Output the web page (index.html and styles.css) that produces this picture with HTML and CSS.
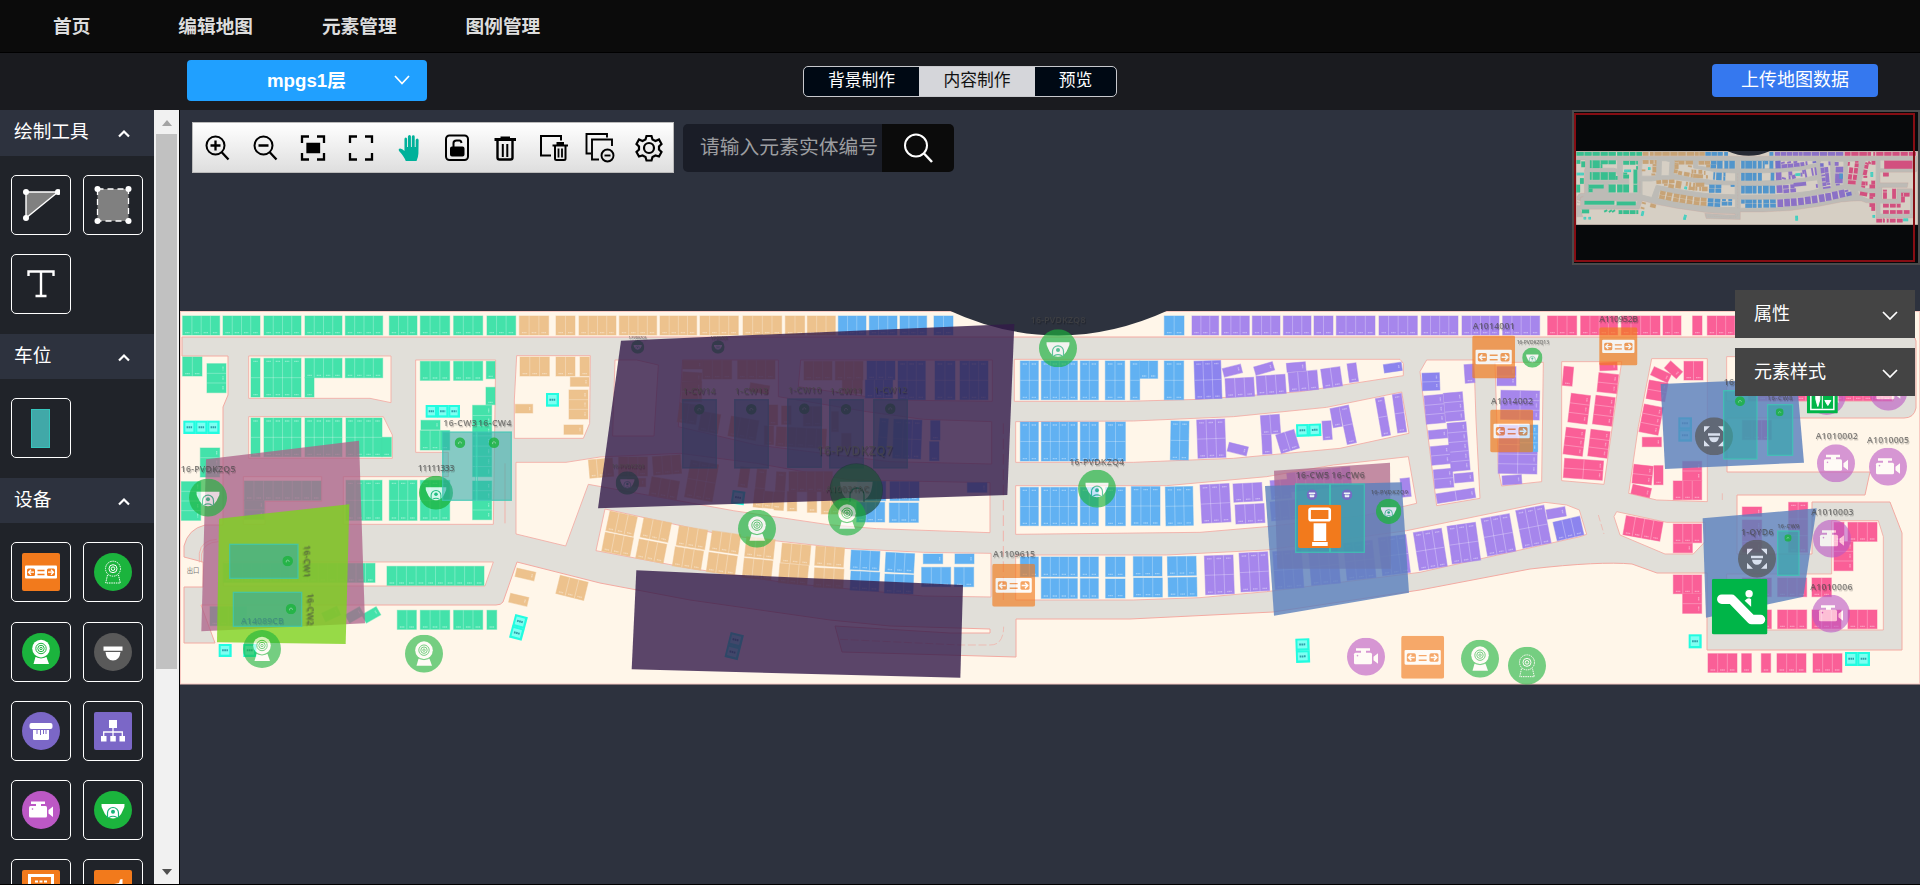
FILE: index.html
```html
<!DOCTYPE html>
<html lang="zh-CN">
<head>
<meta charset="utf-8">
<title>编辑地图</title>
<link rel="stylesheet" href="styles.css">
</head>
<body>
<svg class="defs" width="0" height="0" aria-hidden="true">
  <defs>
    <symbol id="i-gate" viewBox="0 0 38 38"><rect width="38" height="38" rx="2" fill="#f27a1c"/><rect x="3" y="12.500" width="32" height="13" rx="1" fill="#fff"/><rect x="5" y="15.500" width="8" height="7.500" rx="1.500" fill="#f27a1c"/><rect x="25" y="15.500" width="8" height="7.500" rx="1.500" fill="#f27a1c"/><path d="M12 19.200H6.500m2.500-2.500l-2.500 2.500 2.500 2.500M26 19.200h5.500m-2.500-2.500l2.500 2.500-2.500 2.500" fill="none" stroke="#fff" stroke-width="1.300"/><path d="M15.500 17.500h7M15.500 21.500h7" stroke="#f27a1c" stroke-width="1.300"/></symbol>
    <symbol id="i-cam-dash" viewBox="0 0 38 38"><circle cx="19" cy="19" r="19" fill="#1bb43d"/><g fill="none" stroke="#fff"><circle cx="19" cy="15.700" r="7.500" stroke-dasharray="1.500 .8"/><path d="M13.500 22l-1.800 8h14.600l-1.800-8" stroke-dasharray="1.500 .8"/><circle cx="19" cy="15.700" r="4"/><circle cx="19" cy="15.700" r="1.800"/></g></symbol>
    <symbol id="i-cam" viewBox="0 0 38 38"><circle cx="19" cy="19" r="19" fill="#1bb43d"/><circle cx="19" cy="15.500" r="8.800" fill="#fff"/><path d="M13.500 24h11l2.500 7H11.500z" fill="#fff"/><g fill="none" stroke="#1bb43d"><circle cx="19" cy="15.500" r="5.200"/><circle cx="19" cy="15.500" r="3.200"/><circle cx="19" cy="15.500" r="1.200"/><path d="M14.500 24q4.500 2 9 0"/></g></symbol>
    <symbol id="i-dome" viewBox="0 0 38 38"><circle cx="19" cy="19" r="19" fill="#595959"/><path d="M9.500 13.500h19v4.200h-19zM11.500 19h15q-1 8.500-7.500 8.500T11.500 19z" fill="#fff"/></symbol>
    <symbol id="i-switch" viewBox="0 0 38 38"><circle cx="19" cy="19" r="19" fill="#7b67c7"/><rect x="7.500" y="11" width="23" height="6" rx="2" fill="#fff"/><path d="M11 18h16v8.500q0 1.500-1.500 1.500h-13q-1.500 0-1.500-1.500z" fill="#fff"/><path d="M15 18v4M18.500 18v5M21.500 18v4M24 18v4" stroke="#7b67c7"/></symbol>
    <symbol id="i-net" viewBox="0 0 38 38"><rect width="38" height="38" rx="2" fill="#7b67c7"/><path d="M15 8h8v8h-8zM7 24h5.500v5.500H7zM16.300 24h5.500v5.500h-5.500zM25.500 24H31v5.500h-5.500z" fill="#fff"/><path d="M19 16v8M9.700 24v-4h18.600v4" fill="none" stroke="#fff" stroke-width="1.300"/></symbol>
    <symbol id="i-video" viewBox="0 0 38 38"><circle cx="19" cy="19" r="19" fill="#bc58c5"/><rect x="7" y="15" width="18" height="11.500" rx="1.500" fill="#fff"/><path d="M26.500 19l4.500-3.500v10.500l-4.500-3.500zM9 10.500h14v2.500H9zM14 13h5v2.500h-5z" fill="#fff"/><circle cx="10.500" cy="18" r=".8" fill="#bc58c5"/></symbol>
    <symbol id="i-face" viewBox="0 0 38 38"><circle cx="19" cy="19" r="19" fill="#1bb43d"/><path d="M7.500 13h23q.5 3-1.500 6-3 8.500-10 8.500T9 19q-2-3-1.500-6z" fill="#fff"/><path d="M13.500 27v-5a5.500 5.500 0 0 1 11 0v5M15 26.500q4-2.500 8 0" fill="none" stroke="#15b277" stroke-width="1.200"/><circle cx="19" cy="20.700" r="2" fill="#15b277"/></symbol>
    <symbol id="i-dot" viewBox="0 0 38 38"><circle cx="19" cy="19" r="19" fill="#1bb43d"/><path d="M14 24v-5a5.500 5.500 0 0 1 10 0v3" fill="none" stroke="#9fe0b4" stroke-width="3"/></symbol>
    <symbol id="i-kiosk" viewBox="0 0 43 43"><rect width="43" height="43" rx="2" fill="#f27a1c"/><rect x="11.500" y="4" width="20" height="11.500" rx="1.500" fill="none" stroke="#fff" stroke-width="2.600"/><path d="M15.500 18.500h12.500V36H15.500zM14 37h15.500v4H14z" fill="#fff"/></symbol>
    <symbol id="i-scan" viewBox="0 0 38 38"><circle cx="19" cy="19" r="19" fill="#595959"/><path d="M9 15V9h6zM23 9h6v6zM9 23v6h6zM29 23v6h-6zM13 16h12v2.500H13zM14 20h10q-.8 5-5 5t-5-5z" fill="#fff"/></symbol>
    <symbol id="i-escalator" viewBox="0 0 56 56"><rect width="56" height="56" rx="2" fill="#00b548"/><path d="M10 20.500h10L40 41h9" fill="none" stroke="#fff" stroke-width="9.500" stroke-linecap="round" stroke-linejoin="round"/><circle cx="37.500" cy="15" r="3.700" fill="#fff"/><path d="M33 22q4-4 6.500-1.500V28z" fill="#fff"/></symbol>
    <symbol id="i-wc" viewBox="0 0 31 31"><rect width="31" height="31" rx="1" fill="#00b548"/><rect x="4" y="2" width="23" height="25" fill="none" stroke="#fff" stroke-width="1.500"/><path d="M15.500 3v23" stroke="#fff"/><path d="M9 8h4v9l-2 7-2-7zM18 18h6l-3 5z" fill="#fff" stroke="#fff"/></symbol>
  </defs>
</svg>

<nav class="topnav">
  <a>首页</a><a>编辑地图</a><a>元素管理</a><a>图例管理</a>
</nav>

<header class="subbar">
  <button class="floor-select"><span>mpgs1层</span><svg width="16" height="10" viewBox="0 0 16 10"><path d="M1 1l7 7.500L15 1" fill="none" stroke="#fff" stroke-width="1.700"/></svg></button>
  <div class="tabs"><span class="tab">背景制作</span><span class="tab tab-on">内容制作</span><span class="tab tab-short">预览</span></div>
  <button class="upload">上传地图数据</button>
</header>

<main class="work">
  <aside class="side">
    <div class="palette">
      <h2 class="sec">绘制工具<svg width="12" height="9" viewBox="0 0 12 9"><path d="M1 7.500l5-5 5 5" fill="none" stroke="#fff" stroke-width="2.200"/></svg></h2>
      <div class="tiles">
        <span class="tile"><svg width="38" height="38" viewBox="0 0 38 38"><path d="M4 6h32L4 32z" fill="#808080" stroke="#fff" stroke-width="1.400"/><g fill="#fff"><circle cx="4" cy="6" r="3"/><circle cx="36" cy="6" r="3"/><circle cx="4" cy="32" r="3"/></g></svg></span>
        <span class="tile"><svg width="38" height="38" viewBox="0 0 38 38"><rect x="3.500" y="3" width="31" height="32" fill="#808080" stroke="#fff" stroke-width="1.300" stroke-dasharray="6 4"/><g fill="#fff"><circle cx="3.500" cy="3" r="3"/><circle cx="34.500" cy="3" r="3"/><circle cx="3.500" cy="35" r="3"/><circle cx="34.500" cy="35" r="3"/></g></svg></span>
        <span class="tile"><svg width="38" height="38" viewBox="0 0 38 38"><path d="M6.500 11V6.500h25V11M19 6.500V31M13.500 31h11" fill="none" stroke="#fff" stroke-width="2.400"/></svg></span>
      </div>
      <h2 class="sec">车位<svg width="12" height="9" viewBox="0 0 12 9"><path d="M1 7.500l5-5 5 5" fill="none" stroke="#fff" stroke-width="2.200"/></svg></h2>
      <div class="tiles"><span class="tile"><i class="slot"></i></span></div>
      <h2 class="sec">设备<svg width="12" height="9" viewBox="0 0 12 9"><path d="M1 7.500l5-5 5 5" fill="none" stroke="#fff" stroke-width="2.200"/></svg></h2>
      <div class="tiles">
        <span class="tile"><svg width="38" height="38"><use href="#i-gate"/></svg></span>
        <span class="tile"><svg width="38" height="38"><use href="#i-cam-dash"/></svg></span>
        <span class="tile"><svg width="38" height="38"><use href="#i-cam"/></svg></span>
        <span class="tile"><svg width="38" height="38"><use href="#i-dome"/></svg></span>
        <span class="tile"><svg width="38" height="38"><use href="#i-switch"/></svg></span>
        <span class="tile"><svg width="38" height="38"><use href="#i-net"/></svg></span>
        <span class="tile"><svg width="38" height="38"><use href="#i-video"/></svg></span>
        <span class="tile"><svg width="38" height="38"><use href="#i-face"/></svg></span>
        <span class="tile"><svg width="38" height="38" viewBox="0 0 38 38"><rect width="38" height="38" rx="2" fill="#f27a1c"/><path d="M7.500 30V5.500h23V30" fill="none" stroke="#fff" stroke-width="3"/><path d="M13 11.500h12" stroke="#fff" stroke-width="2" stroke-dasharray="3 1.500"/></svg></span>
        <span class="tile"><svg width="38" height="38" viewBox="0 0 38 38"><rect width="38" height="38" rx="2" fill="#f27a1c"/><path d="M20 14l5-1 1-3.500 2.500-.5v20H16z" fill="#fff"/></svg></span>
      </div>
    </div>
    <div class="scroll"><i class="arrow arrow-up"></i><i class="thumb"></i><i class="arrow arrow-down"></i></div>
  </aside>

  <section class="canvas">
    <svg class="map" width="1740" height="774" viewBox="180 110 1740 774"><g id="floor"></g><g id="overlay"></g></svg>

    <div class="tools">
      <div class="toolbar">
        <svg viewBox="0 0 28 28" fill="none" stroke="#000" stroke-width="2"><circle cx="12.500" cy="11.500" r="9"/><path d="M12.500 6.500v10M7.500 11.500h10M18.500 18l7 7.500" stroke-width="2.300"/></svg>
        <svg viewBox="0 0 28 28" fill="none" stroke="#000" stroke-width="2"><circle cx="12.500" cy="11.500" r="9"/><path d="M7.500 11.500h10M18.500 18l7 7.500" stroke-width="2.300"/></svg>
        <svg viewBox="0 0 28 28" fill="none" stroke="#000" stroke-width="2.300"><path d="M3 9V2.500h7M18 2.500h7V9M3 19v6.500h7M18 25.500h7V19"/><path d="M8.500 10h11.500v8H8.500z" fill="#000"/></svg>
        <svg viewBox="0 0 28 28" fill="none" stroke="#000" stroke-width="2.300"><path d="M3 9V2.500h7M18 2.500h7V9M3 19v6.500h7M18 25.500h7V19"/></svg>
        <svg viewBox="0 0 28 28"><path d="M9.500 27Q8 22.500 3.300 17q-1-2.500 1-2.500 2 .3 4 2.500V5q0-1.500 1.200-1.500T10.700 5v8h.8V2.500Q11.700 1 13 1t1.300 1.500V13h.8V2.700q.2-1.400 1.400-1.400t1.300 1.400V13h.9V6q.2-1.500 1.400-1.500t1.300 1.500l-.2 13.500q-.2 4-1.700 7.500z" fill="#00b19a" transform="translate(.5 0) scale(1.080 1)"/></svg>
        <svg viewBox="0 0 28 28" fill="none" stroke="#000" stroke-width="2"><rect x="3" y="1.500" width="22" height="24.500" rx="3.500"/><rect x="8" y="13.500" width="12.500" height="8" rx="1" fill="#000"/><path d="M10.500 13V9q0-2.500 3-2.500h3q1.500 0 2 2.500"/></svg>
        <svg viewBox="0 0 28 28" fill="none" stroke="#000" stroke-width="2.400"><path d="M3.500 5.500h21.500M9.500 4h9.500" stroke-width="3"/><path d="M6.500 7v16.500q0 2 2 2h11q2 0 2-2V7"/><path d="M11.800 10v13M16.300 10v13" stroke-width="2"/></svg>
        <svg viewBox="0 0 28 28" fill="none" stroke="#000" stroke-width="2"><path d="M12 21.500H2V2h20v4.500M13.500 11.500h15.500"/><path d="M17.500 9.500h7.500" stroke-width="3"/><path d="M16 12v12.500q0 1.500 1.500 1.500h7.500q1.500 0 1.500-1.500V12"/><path d="M19.500 14.500v9M23 14.500v9" stroke-width="1.800"/></svg>
        <svg viewBox="0 0 28 28" fill="none" stroke="#000" stroke-width="1.900"><path d="M4 19.500H-.5V0H20v3.500M12 25.500H5V5.500h20V12"/><circle cx="20.500" cy="21.500" r="6"/><path d="M17.500 21.500h6"/></svg>
        <svg viewBox="0 0 28 28" fill="none" stroke="#000" stroke-width="2.200"><path d="M11.500 2h5l1 3.500 3 1.500 3.500-1.500 2.500 4.500-2.500 2.500v3l2.500 2.500-2.500 4.500-3.500-1-3 1.500-1 3.500h-5l-1-3.500-3-1.500-3.500 1L1.500 18 4 15.500v-3L1.500 10 4 5.500 7.500 7l3-1.500z"/><circle cx="14" cy="14" r="5"/></svg>
      </div>
      <div class="search"><span class="query">请输入元素实体编号</span><span class="go"><svg width="30" height="30" viewBox="0 0 30 30" fill="none" stroke="#fff"><circle cx="13" cy="12.500" r="11" stroke-width="2"/><path d="M21 20.500l8 8.500" stroke-width="2.500"/></svg></span></div>
    </div>

    <div class="mini"><svg width="342" height="74" viewBox="180 311 1740 374" preserveAspectRatio="none"><use href="#floor"/></svg><i class="view"></i></div>

    <div class="panels">
      <div class="panel">属性<svg width="16" height="10" viewBox="0 0 16 10"><path d="M1 1l7 7L15 1" fill="none" stroke="#fff" stroke-width="1.700"/></svg></div>
      <div class="panel">元素样式<svg width="16" height="10" viewBox="0 0 16 10"><path d="M1 1l7 7L15 1" fill="none" stroke="#fff" stroke-width="1.700"/></svg></div>
    </div>
  </section>
</main>
<script src="map.js"></script>
</body>
</html>
```
FILE: styles.css
```css
* { box-sizing: border-box; }
body { margin: 0; height: 885px; overflow: hidden; background: #000; color: #fff; font-family: "Liberation Sans", "Noto Sans CJK SC", sans-serif; display: flex; flex-direction: column; }
button { border: 0; color: #fff; font-family: inherit; padding: 0; }
.defs { position: absolute; }
.topnav { flex: none; height: 53px; background: #0b0b0b; border-bottom: 1px solid #000; display: flex; align-items: center; padding: 0 0 4px 53px; gap: 69px; font-size: 18.67px; font-weight: bold; color: #ddd; }
.topnav a:first-child { margin-right: 19px; }
.subbar { flex: none; height: 57px; background: #1a1b1f; display: grid; grid-template-columns: 616px 314px 1fr; column-gap: 0; align-items: center; padding: 0 42px 3px 187px; }
.floor-select { width: 240px; height: 41px; border-radius: 4px; background: #20a0ff; display: flex; align-items: center; justify-content: space-between; padding: 0 17px 0 80px; font-size: 18.67px; font-weight: bold; }
.floor-select span { padding-bottom: 4px; }
.tabs { height: 31px; margin-top: 2px; border: 1px solid #c8c9cd; border-radius: 5px; overflow: hidden; display: flex; background: #000914; font-size: 16.8px; line-height: 27px; text-align: center; }
.tab { flex: 0 0 115px; }
.tab-on { flex-basis: 116px; background: #d5d6da; color: #111; }
.tab-short { flex: 1; }
.upload { justify-self: end; width: 166px; height: 33px; border-radius: 4px; background: #3578ef; font-size: 18px; line-height: 31px; }
.work { flex: none; height: 774px; display: flex; background: #2d323e; overflow: hidden; }
.side { flex: none; width: 180px; display: flex; background: #202329; border-right: 1px solid #050507; }
.palette { width: 154px; overflow: hidden; }
.sec { margin: 0; height: 46px; padding: 0 23px 2px 14px; background: #2d323e; display: flex; align-items: center; justify-content: space-between; font-size: 18.67px; font-weight: normal; line-height: 40px; }
.sec svg { width: 14px; margin-top: 3px; }
.palette .sec:not(:first-child) { height: 45px; }
.tiles { padding: 19px 11px 20px; display: grid; grid-template-columns: 60px 60px; column-gap: 12px; row-gap: 19.3px; }
.tile { width: 60px; height: 60px; border: 1px solid #fff; border-radius: 5px; display: flex; align-items: center; justify-content: center; }
.slot { width: 19px; height: 39px; margin-right: 1px; background: #41a8a8; border: 1px solid #36c6bd; }
.scroll { flex: none; width: 25px; background: #f1f1f1; display: flex; flex-direction: column; align-items: center; }
.arrow { width: 0; height: 0; border: 5.500px solid transparent; }
.arrow-up { margin-top: 5px; border-bottom-color: #a3a3a3; border-bottom-width: 6px; }
.thumb { width: 21px; height: 535px; margin-top: 8px; background: #c1c1c1; }
.arrow-down { margin-top: auto; margin-bottom: 4px; border-top-color: #505050; border-top-width: 6px; }
.canvas { position: relative; flex: 1; }
.map { display: block; }
.tools { position: absolute; left: 12px; top: 12px; display: flex; align-items: center; gap: 9px; }
.toolbar { width: 482px; height: 51px; border: 1px solid #bbb; background: linear-gradient(#fff, #dedede); display: flex; align-items: center; gap: 20px; padding-left: 10px; }
.toolbar svg { width: 28px; height: 28px; flex: none; overflow: visible; }
.search { width: 271px; height: 48px; border-radius: 5px; overflow: hidden; display: flex; font-size: 19.8px; }
.query { width: 199px; padding-left: 17px; background: #1a1d27; color: #9c9da0; line-height: 46px; white-space: nowrap; overflow: hidden; }
.go { flex: 1; padding-right: 1px; background: #0b0b0b; display: flex; align-items: center; justify-content: center; }
.mini { position: absolute; left: 1392px; top: 0; width: 348px; height: 155px; border: 2px solid #4a4a4b; background: #07090b; --edge: #e1dfd9; --edge-width: 14; --marks: none; }
.mini svg { display: block; margin: 39px 0 0 2px; filter: brightness(.84); }
.view { position: absolute; left: 0; top: 1px; width: 341px; height: 149px; border: 2px solid #850d13; }
.panels { position: absolute; left: 1555px; top: 180px; width: 180px; display: flex; flex-direction: column; gap: 10px; }
.panel { height: 48px; padding: 0 17px 1px 19px; background: #444; display: flex; align-items: center; justify-content: space-between; font-size: 18px; line-height: 46px; }
.panel svg { margin-top: 4px; }
.edge { fill: #fff6e9; stroke: var(--edge, #f3aaa2); stroke-width: var(--edge-width, 2.5); stroke-linejoin: round; }
.marks { display: var(--marks, inline); }
.tag { font-family: "Open Sans", "Noto Sans", sans-serif; font-weight: 600; fill: #454545; opacity: .68; filter: drop-shadow(3px 4px 2px rgba(0, 0, 0, .35)); }
.exit { font-family: "Noto Sans CJK SC", sans-serif; fill: #777; }
.pad { fill: #2faaa8; fill-opacity: .58; stroke: #3cc8b4; stroke-width: 4; stroke-opacity: .75; }
```
FILE: map.js
```js
// Floor plan. Each sheet has its own origin and is drawn at three units per pixel.
var COLORS = { g: '#43e2aa', o: '#edc28d', b: '#61b1f2', p: '#a686ec', r: '#fa5f97', v: '#8c84ee' };
var SHEETS = { A: [180, 300], B: [590, 300], C: [1000, 300], D: [1420, 270] };
function sheet(k, body) { return '<g transform="translate(' + SHEETS[k] + ') scale(.33333)">' + body + '</g>'; }
function list(s) { return s.trim().split(/\s*;\s*/).filter(Boolean); }

// Block of parking bays: colour, x, y, width, height, columns, rows, rotation
function bays(s) {
  return list(s).map(function (row) {
    var a = row.split(/\s+/), c = a[0], n = a.slice(1).map(Number);
    var x = n[0], y = n[1], w = n[2], h = n[3], cols = n[4] || 1, rows = n[5] || 1, r = n[6] || 0, d = '', m = '', i, j;
    for (i = 1; i < cols; i++) d += 'M' + (x + w * i / cols) + ' ' + y + 'v' + h;
    for (j = 1; j < rows; j++) d += 'M' + x + ' ' + (y + h * j / rows) + 'h' + w;
    for (i = 0; i < cols; i++) for (j = 0; j < rows; j++) {
      var cw = w / cols, ch = h / rows;
      if (cw > ch * 1.3) m += 'M' + (x + w - 9) + ' ' + (y + ch * (j + .3)) + 'v' + ch * .4;
      else m += 'M' + (x + cw * (i + .26)) + ' ' + (rows > 1 && j < rows / 2 ? y + 9 : y + h - 7) + 'h' + cw * .48;
    }
    return '<g transform="rotate(' + [r, x, y] + ')"><rect x="' + x + '" y="' + y + '" width="' + w + '" height="' + h + '" fill="' + COLORS[c] + '" stroke="' + COLORS[c] + '" stroke-opacity=".5" stroke-width="3"/><g class="marks" stroke="#fff"><path d="' + d + '" stroke-opacity=".42" stroke-width="2"/><path d="' + m + '" stroke-opacity=".38" stroke-width="4" stroke-dasharray="4 1"/></g></g>';
  }).join('');
}
// Small turquoise rooms: x, y, count, cell width, cell height, rotation, stacked
function rooms(s) {
  return list(s).map(function (row) {
    var n = row.split(/\s+/).map(Number), x = n[0], y = n[1], cw = n[3], ch = n[4], o = '';
    var down = n[6];
    for (var i = 0; i < n[2]; i++) {
      var cx = x + (down ? 0 : i * cw), cy = y + (down ? i * ch : 0);
      o += '<rect x="' + cx + '" y="' + cy + '" width="' + (cw + 1) + '" height="' + (ch + 1) + '" fill="#22fce0"/><rect x="' + (cx + 6) + '" y="' + (cy + 6) + '" width="' + (cw - 12) + '" height="' + (ch - 12) + '" fill="#7dfff2"/><path d="M' + (cx + cw * .27) + ' ' + (cy + ch / 2) + 'h' + cw * .46 + '" stroke="#2c9fa8" stroke-width="6" stroke-dasharray="5 1.500"/>';
    }
    return '<g transform="rotate(' + [n[5] || 0, x, y] + ')">' + o + '</g>';
  }).join('');
}
function islands(s) {
  return list(s).map(function (p) { return '<polygon class="edge" points="' + p + '"/>'; }).join('');
}
function zone(points, fill, alpha) { return '<polygon points="' + points + '" fill="' + fill + '" fill-opacity="' + alpha + '"/>'; }
function icon(id, cx, cy, size, alpha) { return '<use href="#i-' + id + '" x="' + (cx - size / 2) + '" y="' + (cy - size / 2) + '" width="' + size + '" height="' + size + '" opacity="' + (alpha || .6) + '"/>'; }
function tag(text, x, y, w, size, rot) { return '<text class="tag" x="' + x + '" y="' + y + '" font-size="' + (size || 26) + '" textLength="' + w + '"' + (rot ? ' transform="rotate(' + [rot, x, y] + ')"' : '') + '>' + text + '</text>'; }
function pad(s) {
  return list(s).map(function (row) { var n = row.split(/\s+/); return '<rect class="pad" x="' + n[0] + '" y="' + n[1] + '" width="' + n[2] + '" height="' + n[3] + '"/>'; }).join('');
}

var road = 'M182 337H1912Q1916 337 1916 341V408Q1914 418 1904 418H1727V472H1870L1865 495H1737V554H1812V502H1890L1902 533V650H1707V573H1657L1632 564Q1600 561 1530 569L1420 590L1273 612L1130 619H1016V657L842 652L835 626L950 633H990V629L890 626L830 620L690 600L600 583L517 562L503 602Q501 605 496 605H201L215 643H184V587H203V562L184 557V546Q188 529 205 525H223V407L228 395V356H182Z';
var floor = '<rect x="180.500" y="311.500" width="1739" height="372.500" fill="#fff6e9" stroke="#f9c9c2"/><path d="' + road + '" fill="#e1dfd9" stroke="#f3aaa2"/>';

floor += sheet('A', islands('206,168 633,168 633,308 570,295 206,295;206,350 610,350 637,405 637,475 206,475;190,530 425,530 425,604 255,604 255,673 190,673;707,180 947,180 940,673 490,673 490,530 805,530 805,457 707,457;130,786 940,786 915,858 130,858;1010,167 1231,167 1229,370 1210,415 1003,415 1003,300') +
  '<path d="M58 787V760Q64 720 110 718M65 787V762Q72 727 115 725M975 490v180" fill="none" stroke="#f3aaa2" stroke-width="2.500"/>' +
  bays('g 8 48 111 57 4;g 129 48 111 57 4;g 252 48 111 57 4;g 375 48 111 57 4;g 496 48 112 57 4;g 628 48 83 57 3;g 721 48 88 57 3;g 821 48 87 57 3;g 921 48 86 57 3;o 1018 48 88 57 3;o 1128 48 57 57 2;o 1197 48 111 57 4;' +
    'g 8 171 58 57 2;g 81 191 57 87 1 3;g 61 444 58 87 1 3;g 4 545 58 116 1 4;g 213 175 27 116 1 2;g 252 175 111 116 4 2;g 375 175 111 58 4;g 375 233 27 58 1;g 496 175 112 58 4;' +
    'g 213 354 27 116 1 2;g 252 354 111 116 4 2;g 375 354 111 116 4 2;g 498 354 108 116 4 2;g 606 412 28 58 1;g 193 543 230 58 8;g 193 601 60 57 1 2;g 498 541 108 120 4 2;g 628 541 83 120 3 2;g 721 541 88 120 3 2;' +
    'g 721 184 88 57 3;g 821 184 87 57 3;g 919 184 26 52 1;g 918 262 27 52 1;g 878 316 57 214 1 7;g 878 543 57 116 1 4;g 723 361 57 28 1;g 721 392 88 58 3;' +
    'g 130 790 455 57 16;g 621 799 291 57 10;g 90 920 110 57 4;g 425 940 50 28 1 1 -25;g 495 945 50 28 1 1 -30;g 545 945 50 28 1 1 -30;g 652 931 57 57 2;g 721 931 88 57 3;g 821 931 87 57 3;g 921 931 29 57 1;' +
    'o 1020 171 88 57 3;o 1128 171 57 57 2;o 1200 171 28 57 1;o 1171 232 56 27;o 1167 270 57 87 1 3;o 1006 313 52 26;o 1152 375 57 28;o 1020 492 88 57 3;o 1118 492 80 57 3;o 1215 485 84 57 3 1 -8;o 1013 554 57 87 1 3;o 1120 554 58 87 1 3;o 1020 644 88 57 3;o 1140 668 28 56 1 1 14;o 1011 804 58 26 1 1 13;o 992 880 56 27 1 1 13;o 1141 826 86 56 3 1 14') +
  rooms('10 362 3 36 39;737 315 3 34 37;1098 279 1 38 40;116 1032 1 38 38;190 1032 1 38 38;1006 942 2 38 36 15 1') +
  '<text class="exit" x="20" y="819" font-size="19">出口</text>');

floor += sheet('B', islands('-222,487 -72,487 30,471 270,460 500,490 780,540 1200,548 1200,698 860,686 715,674 430,632 -5,553 -73,738 -222,702;75,180 140,180 205,195 192,408 68,408;278,180 565,180 565,290 830,335 1000,358 1205,365 1205,492 900,485 500,435 265,380;632,180 1207,180 1207,304 900,300 625,260;45,627 400,705 760,745 1000,757 1203,760 1203,891 1000,888 600,850 300,805 18,752') +
  '<path d="M1240 370V900" stroke="#f3aaa2" stroke-width="2.500" stroke-dasharray="32 14"/><path d="M750 1018L1110 1035H1200Q1240 1036 1241 980" fill="none" stroke="#f3aaa2" stroke-width="2" stroke-dasharray="24 8"/>' +
  bays('o 88 48 112 57 4;o 210 48 110 57 4;o 330 48 115 57 4;o 459 48 116 57 4;o 586 48 58 57 2;o 652 48 84 57 3;b 745 48 83 57 3;b 838 48 83 57 3;b 930 48 80 57 3;b 1032 48 57 57 2;' +
    'o 278 181 60 26;o 338 181 87 56 3;o 443 181 112 56 4;o 278 215 58 28 1 1 4;o 275 245 60 60 1 2;o 482 248 58 26 1 1 10;o 642 184 84 56 3;o 736 184 83 56 3;o 757 240 60 40 2;b 831 183 84 56 3;b 826 240 82 54 3;b 924 183 82 116 3 2;b 1035 183 60 116 2 2;b 1110 183 84 116 3 2;' +
    'o 270 308 56 58 2 1 8;o 335 334 58 58 2 1 10;o 424 348 84 60 3 1 10;o 535 315 28 60;o 575 318 28 55;o 523 378 28 56;o 560 380 150 58 5 1 3;o 640 320 56 58 2;o 725 335 20 60;o 755 400 28 50;b 870 355 25 112 1 2 4;b 912 358 84 116 3 2 2;b 1022 362 28 58;b 1019 425 28 57;' +
    'o -5 480 72 55 3 1 -5;o 86 471 86 57 3;o 187 470 84 56 3 1 -4;o 113 535 54 25;o 186 530 84 56 3 1 10;o 303 480 84 112 3 2 10;o 452 500 28 60 1 1 8;o 502 506 28 115 1 2 6;o 560 515 28 115 1 2 4;o 495 570 84 50 3 1 6;o 597 515 130 60 5;o 592 575 28 58;o 652 575 28 62;o 694 575 84 67 3;b 803 544 84 58 3;b 800 607 84 59 3;b 900 545 87 57 3;b 898 609 87 58 3;b 1132 548 59 29;' +
    'o 60 633 84 60 3 1 12;o 46 697 86 57 3 1 11;o 162 653 84 59 3 1 11;o 148 717 84 58 3 1 11;o 268 677 86 59 3 1 9;o 256 740 86 58 3 1 9;o 367 692 86 59 3 1 8;o 357 757 86 58 3 1 8;o 470 710 86 59 3 1 6;o 463 774 86 58 3 1 6;o 577 729 86 59 3 1 5;o 570 790 86 58 3 1 5;o 678 738 86 58 3 1 4;o 674 803 88 58 3 1 3;' +
    'b 784 750 86 58 3 1 3;b 783 813 86 57 3 1 3;b 888 757 86 58 3 1 3;b 885 822 86 57 3 1 2;b 1000 762 58 29;b 1095 762 57 29;b 995 802 87 58 3;b 1093 802 58 58 2') +
  rooms('428 570 1 38 40 8;422 996 2 40 38 14 1'));

floor += sheet('C', islands('43,178 1200,178 1210,190 1210,227 900,275 600,298 380,304 43,304;47,365 400,363 700,350 980,322 1205,276 1227,400 1020,445 700,475 400,487 47,487;47,557 500,557 800,530 1000,495 1225,470 1250,610 1100,645 800,680 600,697 47,703;47,765 500,765 800,750 1220,692 1635,607 1700,615 1738,630 1760,703 1740,710 1260,817 800,875 600,893 400,900 47,900;1260,215 1280,180 1422,180 1428,360 1440,595 1310,617') +
  bays('b 493 48 59 57 2;p 576 48 80 57 3;p 665 48 83 57 3;p 757 48 83 57 3;p 850 48 83 57 3;p 942 48 57 57 2;p 1009 48 116 57 4;p 1137 48 115 57 4;' +
    'b 61 183 54 116 2 2;b 124 183 108 116 4 2;b 241 183 54 116 2 2;b 316 183 58 116 2 2;b 391 183 28 116 1 2;b 419 183 54 52 2;b 493 183 58 116 2 2;v 582 184 80 114 3 2 -2;p 667 206 56 26 1 1 -14;p 675 236 86 57 3 1 -3;p 761 201 58 26 1 1 -16;p 768 229 87 57 3 1 -4;p 859 190 57 27 1 1 -5;p 864 218 87 58 3 1 -5;p 962 208 58 58 2 1 -8;p 1041 192 27 56 1 1 -8;v 1150 194 54 25 1 1 -8;' +
    'b 61 366 54 117 2 2;b 124 366 108 117 4 2;b 241 366 54 117 2 2;b 317 366 59 117 2 2;b 513 363 54 116 2 2 1;p 590 360 84 115 3 2 -2;p 688 427 59 27 1 1 14;p 781 347 57 57 2 1 -4;p 785 405 28 58 1 1 -3;p 827 405 57 58 2 1 -17;p 966 364 27 56 1 1 -4;p 990 326 27 58 1 1 -10;p 1018 321 28 115 1 2 -12;p 1126 296 26 115 1 2 -10;p 1177 284 27 116 1 2 -8;' +
    'b 61 562 54 115 2 2;b 124 562 108 115 4 2;b 241 562 54 115 2 2;b 317 562 59 115 2 2;b 394 560 86 116 3 2;b 496 561 82 116 3 2 -1;p 600 555 87 115 3 2 -3;p 699 552 86 55 3 1 -3;p 705 615 87 57 3 1 -3;p 810 542 60 57 2 1 -5;p 810 606 84 57 3 1 -5;p 860 520 190 57 7 1 -6;p 1200 536 28 56 1 1 -6;' +
    'b 61 771 54 59 2;b 124 771 108 59 4;b 241 771 54 59 2;b 317 771 58 59 2;b 400 770 86 58 3;b 502 770 86 57 3 1 -1;b 124 836 108 59 4;b 241 836 54 59 2;b 317 837 58 57 2;b 401 834 86 57 3;b 504 833 86 57 3 1 -1;p 613 768 86 116 3 2 -2;p 717 760 86 116 3 2 -3;p 818 755 86 114 3 2 -4;p 925 745 87 112 3 2 -5;p 1030 730 87 112 3 2 -6;p 1134 714 84 114 3 2 -7;p 1240 698 85 115 3 2 -9') +
  rooms('888 373 2 37 37 -2;886 1016 2 41 36 -2 1'));

floor += sheet('D', islands('225,277 370,277 365,635 245,648 235,600;425,275 605,275 552,643 425,632;695,266 862,266 862,695 710,690 626,670 655,470;590,725 740,757 855,757 855,815 820,852 735,852 600,795 582,740;920,260 1420,260 1420,393 920,393;920,912 1235,912 1235,752 1375,752 1390,800 1390,1080 920,1080') +
  '<path d="M535 735L552 792M907 670v20" stroke="#f3aaa2" stroke-width="2" stroke-dasharray="20 8"/>' +
  bays('p 4 138 110 57 4;p 126 138 111 57 4;p 248 138 111 57 4;r 383 138 87 57 3;r 482 138 111 57 4;r 604 138 116 57 4;r 729 138 54 57 2;r 818 138 28 57;r 862 138 110 57 4;r 985 138 110 57 4;r 1110 138 110 57 4;r 1235 138 110 57 4;r 1360 138 110 57 4;' +
    'v 6 310 52 52 1 2 -2;p 132 284 29 56 1 1 -4;p 12 378 57 85 1 3 -5;p 70 370 57 85 1 3 -5;p 25 482 56 26 1 1 -5;p 81 460 57 145 1 5 -5;p 31 530 57 56 1 2 -5;p 40 600 57 56 1 2 -5;p 102 612 57 27 1 1 -5;p 48 672 116 29 2 1 -9;p 231 290 57 57 1 2;p 243 361 116 87 2 3 1;p 237 465 116 145 2 5 1;b 300 465 53 80 1 3;p 246 618 58 27 1 1 -4;' +
    'r 432 289 29 57 1 1 5;r 539 278 52 24 1 1 -2;r 537 308 59 57 1 2 6;r 454 370 58 86 1 3 7;r 528 376 58 86 1 3 7;r 439 472 58 80 1 3 7;r 513 478 58 80 1 3 7;r 434 565 117 58 2 2 4;r 703 290 56 27 1 1 25;r 752 273 48 28 1 1 42;r 792 274 57 56 2;r 688 330 57 56 1 2 10;r 673 402 58 84 1 3 11;r 667 502 57 28;r 642 583 58 56 1 2 6;r 702 587 27 57;r 639 643 57 28 1 1 13;r 788 574 57 58 1 2;r 760 633 85 56 3;' +
    'r 619 737 112 58 4 1 10;r 760 762 85 56 3;r 760 820 57 28;r 760 915 85 56 3;r 788 972 57 58 1 2;r 967 451 87 58 3;r 985 270 430 122 15 2;' +
    'r 967 711 58 28;r 967 750 58 97 1 3;r 1106 697 57 150 2 3;r 1284 757 87 57 3;r 1242 757 30 57;r 1242 815 57 87 1 3;r 967 924 87 56 3;r 1073 924 87 56 3;r 1176 924 58 56 2;r 967 1020 87 56 3;r 1073 1020 87 56 3;r 1176 1020 87 56 3;r 1284 1020 87 56 3;r 864 1151 87 56 3;r 965 1151 29 56;r 1024 1151 28 56;r 1071 1151 87 56 3;r 1179 1151 87 56 3;' +
    'p 81 769 86 114 3 2 -8;p 183 746 86 114 3 2 -10;p 287 722 86 115 3 2 -11;p 378 720 57 28 1 1 -10;v 399 757 82 57 3 1 -13') +
  rooms('775 442 2 40 36 0 1;806 1093 1 38 41;1275 1146 2 37 41'));
floor += '<path d="M948 310Q1058 361 1169 310Z" fill="#2d323e"/>';

var DARK = '#321949', BLUE = '#5a7fbd', PINK = '#ac6288';
var over = sheet('A', zone('78,478 537,422 555,970 64,994', PINK, .75) + zone('117,656 508,613 497,1032 111,1027', '#7dd31e', .8) +
  icon('face', 84, 593, 114, .65) + icon('face', 768, 578, 102, .75) + tag('A14089CB', 183, 971, 128) + pad('149 733 205 102;160 877 205 102;788 396 100 205;892 396 102 205') +
  icon('dot', 323, 783, 32, .8) + icon('dot', 333, 927, 32, .8) + icon('dot', 840, 428, 32, .8) + icon('dot', 942, 428, 32, .8) +
  icon('cam', 246, 1047, 114) + icon('cam', 732, 1061, 114) +
  tag('16-PVDKZQ5', 2, 517, 164) + tag('11111333', 713, 512, 110) + tag('16-CW3', 790, 379, 100) + tag('16-CW4', 894, 379, 100) +
  tag('16-CW1', 373, 735, 97, 26, 90) + tag('16-CW2', 383, 879, 97, 26, 90));

over += sheet('B', pad('278 299 101 205;434 299 101 205;593 297 101 205;719 299 101 205;851 299 101 205') +
  icon('face', 143, 141, 40, .8) + icon('face', 384, 141, 40, .8) + icon('face', 112, 549, 70, .8) + icon('dot', 328, 328, 32, .9) + icon('dot', 484, 328, 32, .9) + icon('dot', 643, 326, 32, .9) + icon('dot', 768, 328, 32, .9) + icon('dot', 901, 326, 32, .9) +
  zone('93,122 1273,72 1252,585 24,625', DARK, .8) + zone('139,811 1119,855 1111,1133 125,1108', DARK, .8) +
  '<circle cx="799" cy="570" r="80" fill="#1c3a35" opacity=".65"/><path d="M750 545h98q-3 60-49 60t-49-60z" fill="#665571" opacity=".7"/><path d="M780 605v-20a21 21 0 0 1 42 0v20" fill="none" stroke="#243d45" stroke-width="4"/>' +
  icon('cam', 501, 686, 114, .65) + icon('cam', 771, 650, 114, .62) + '<circle cx="799" cy="570" r="78" fill="#1bb43d" opacity=".12"/>' + icon('gate', 1271, 856, 129, .65) +
  tag('1-CW14', 278, 282, 98) + tag('1-CW13', 434, 282, 100) + tag('1-CW10', 594, 280, 100) + tag('1-CW11', 719, 282, 98) + tag('1-CW12', 851, 280, 100) + tag('16-PVDKZQ7', 680, 466, 228, 35) + tag('A10031AC', 707, 577, 130) + tag('16-PVDKZQ6', 66, 504, 97, 15) + tag('1-PVDKZQ5', 116, 116, 54, 10) + tag('1-PVDKZQ6', 362, 116, 50, 10) + tag('A1109615', 1209, 772, 126));

over += sheet('C', icon('face', 174, 145, 114, .65) + icon('face', 291, 566, 114, .65) + zone('822,512 1170,488 1173,806 832,806', PINK, .72) + zone('795,558 1205,547 1227,878 822,947', BLUE, .8) +
  pad('887 552 102 205;991 552 102 205') + icon('switch', 936, 584, 32, .9) + icon('switch', 1041, 584, 32, .9) + icon('kiosk', 959, 679, 130, 1) + icon('face', 1166, 634, 76, .75) +
  icon('video', 1098, 1070, 114) + icon('gate', 1268, 1072, 129, .62) +
  tag('16-PVDKZQ8', 92, 69, 164) + tag('16-PVDKZQ4', 208, 494, 164) + tag('16-CW5', 887, 535, 100) + tag('16-CW6', 994, 535, 100) + tag('16-PVDKZQ9', 1112, 583, 112, 17));

over += sheet('D', icon('gate', 221, 261, 129, .68) + icon('face', 337, 263, 61, .65) + icon('gate', 595, 229, 115, .68) + icon('gate', 275, 483, 129, .68) +
  zone('722,342 1130,325 1152,578 735,597', BLUE, .82) + zone('848,745 1190,715 1150,980 858,1043', BLUE, .8) +
  icon('scan', 882, 499, 114, .72) + icon('scan', 1011, 866, 114, .72) + pad('911 362 100 205;1043 404 75 152;1073 783 64 133') +
  icon('dot', 960, 394, 30, .8) + icon('dot', 1079, 427, 24, .8) + icon('dot', 1104, 804, 22, .8) +
  icon('video', 1220, 378, 114) + icon('video', 1405, 365, 114) + icon('video', 1248, 580, 114) + icon('video', 1404, 590, 114) + icon('video', 1236, 806, 114) + icon('video', 1233, 1031, 114) +
  icon('wc', 1207, 384, 93, 1) + icon('escalator', 959, 1010, 167, 1) + icon('cam', 180, 1166, 114) + icon('cam-dash', 321, 1187, 114) +
  tag('A1014001', 158, 178, 126) + tag('16-PVDKZQ13', 290, 222, 97, 15) + tag('A110952B', 538, 157, 116) + tag('A1014002', 213, 403, 126) + tag('16-CW7', 911, 346, 100) + tag('16-CW8', 1042, 390, 75, 18) +
  tag('A1010002', 1187, 508, 126) + tag('A1010005', 1341, 518, 126) + tag('1-QYD6', 963, 794, 97) + tag('16-CW9', 1072, 773, 66, 17) + tag('A1010003', 1174, 734, 126) + tag('A1010006', 1171, 959, 126));

document.getElementById('floor').innerHTML = floor;
document.getElementById('overlay').innerHTML = over;
```
